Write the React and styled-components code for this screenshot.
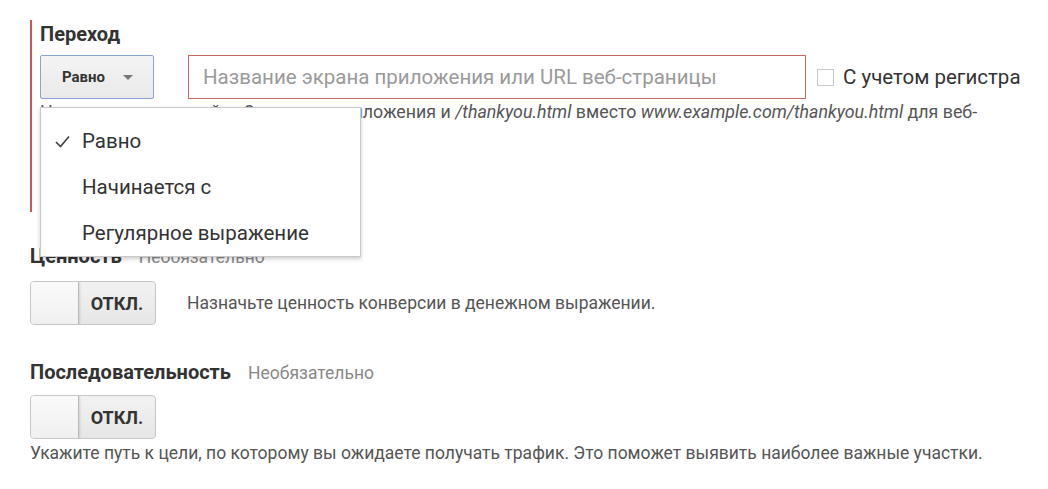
import styled, { createGlobalStyle } from "styled-components";

const GlobalStyle = createGlobalStyle`
  html, body {
    margin: 0;
    padding: 0;
    background: #fff;
  }
  body {
    font-family: Roboto, "Noto Sans", sans-serif;
    color: #333;
  }
`;

const Page = styled.div`
  width: 1048px;
  height: 489px;
  overflow: hidden;
  padding: 20px 0 0 30px;
  box-sizing: border-box;
`;

const Section = styled.div`
  border-left: 2px solid #d0574a;
  padding: 2px 0 0 8px;
  height: 192px;
  box-sizing: border-box;
`;

const Title = styled.div`
  font-size: 20px;
  font-weight: 700;
  color: #333;
  line-height: 24px;
  display: flex;
  align-items: baseline;
  gap: 17px;
  white-space: nowrap;
`;

const Optional = styled.span`
  font-size: 17.5px;
  font-weight: 400;
  color: #888;
`;

const Row = styled.div`
  display: flex;
  align-items: center;
  margin-top: 9px;
`;

const DropWrap = styled.div`
  position: relative;
  width: 114px;
  margin-right: 34px;
`;

const DropButton = styled.button`
  width: 114px;
  height: 44px;
  border: 1px solid #8aa4d6;
  border-radius: 2px;
  background: linear-gradient(#f4f4f4, #e9e9e9);
  font-family: Roboto, sans-serif;
  font-size: 15px;
  font-weight: 700;
  color: #333;
  display: flex;
  align-items: center;
  padding: 0 0 0 21px;
  gap: 18px;
`;

const Caret = styled.span`
  width: 0;
  height: 0;
  border-left: 5px solid transparent;
  border-right: 5px solid transparent;
  border-top: 5px solid #777;
`;

const Menu = styled.ul`
  position: absolute;
  top: 52px;
  left: 0;
  width: 321px;
  margin: 0;
  padding: 10px 0 0;
  list-style: none;
  background: #fff;
  border: 1px solid #c9c9c9;
  box-shadow: 0 2px 4px rgba(0, 0, 0, 0.2);
  box-sizing: border-box;
  z-index: 2;
`;

const MenuItem = styled.li`
  height: 46px;
  display: flex;
  align-items: center;
  padding-left: 14px;
  font-size: 20.5px;
  color: #333;
  white-space: nowrap;
`;

const Check = styled.span`
  width: 27px;
  display: inline-flex;
  align-items: center;
  visibility: ${(p) => (p.$on ? "visible" : "hidden")};
`;

const TextInput = styled.input`
  width: 618px;
  height: 44px;
  box-sizing: border-box;
  border: 1px solid #c96a60;
  border-radius: 0;
  padding: 0 14px;
  font-family: Roboto, sans-serif;
  font-size: 20.5px;
  color: #333;
  outline: none;
  &::placeholder {
    color: #9a9a9a;
  }
`;

const CheckLabel = styled.label`
  display: flex;
  align-items: center;
  margin-left: 11px;
  font-size: 20.5px;
  color: #333;
  gap: 9px;
  white-space: nowrap;
`;

const Box = styled.span`
  width: 15px;
  height: 15px;
  border: 1px solid #c8c8c8;
  background: #fff;
`;

const Help = styled.p`
  margin: 2px 0 0;
  width: 960px;
  font-size: 17.8px;
  line-height: 22px;
  color: #555;
  em {
    font-style: italic;
  }
`;

const Block = styled.div`
  margin-top: ${(p) => p.$top}px;
`;

const ToggleRow = styled.div`
  display: flex;
  align-items: center;
  gap: 31px;
  margin-top: ${(p) => p.$top}px;
`;

const Toggle = styled.div`
  width: 126px;
  height: 44px;
  box-sizing: border-box;
  border: 1px solid #c6c6c6;
  border-radius: 4px;
  background: linear-gradient(#f2f2f2, #e6e6e6);
  display: flex;
  overflow: hidden;
`;

const Knob = styled.div`
  width: 47px;
  background: linear-gradient(#fafafa, #f0f0f0);
  border-right: 1px solid #b9b9b9;
  box-shadow: 1px 0 2px rgba(0, 0, 0, 0.12);
`;

const ToggleText = styled.div`
  flex: 1;
  display: flex;
  align-items: center;
  justify-content: center;
  font-size: 18px;
  font-weight: 700;
  color: #333;
`;

const Note = styled.div`
  font-size: 17.5px;
  line-height: 22px;
  color: #555;
  white-space: nowrap;
`;

const BottomNote = styled(Note)`
  margin-top: 3px;
`;

const SwitchOff = () => (
  <Toggle>
    <Knob />
    <ToggleText>ОТКЛ.</ToggleText>
  </Toggle>
);

export default function App() {
  return (
    <>
      <GlobalStyle />
      <Page>
        <Section>
          <Title>Переход</Title>
          <Row>
            <DropWrap>
              <DropButton>
                Равно <Caret />
              </DropButton>
              <Menu>
                <MenuItem>
                  <Check $on>
                    <svg width="15" height="13" viewBox="0 0 15 13">
                      <path d="M1 7 L5.5 11.5 L14 1.5" fill="none" stroke="#444" strokeWidth="1.7" />
                    </svg>
                  </Check>
                  Равно
                </MenuItem>
                <MenuItem>
                  <Check />
                  Начинается с
                </MenuItem>
                <MenuItem>
                  <Check />
                  Регулярное выражение
                </MenuItem>
              </Menu>
            </DropWrap>
            <TextInput placeholder="Название экрана приложения или URL веб-страницы" />
            <CheckLabel>
              <Box />
              С учетом регистра
            </CheckLabel>
          </Row>
          <Help>
            Например, используйте <em>Экран</em> для приложения и <em>/thankyou.html</em> вместо{" "}
            <em>www.example.com/thankyou.html</em> для веб-страницы.
          </Help>
        </Section>

        <Block $top={32}>
          <Title>
            Ценность <Optional>Необязательно</Optional>
          </Title>
          <ToggleRow $top={12}>
            <SwitchOff />
            <Note>Назначьте ценность конверсии в денежном выражении.</Note>
          </ToggleRow>
        </Block>

        <Block $top={35}>
          <Title>
            Последовательность <Optional>Необязательно</Optional>
          </Title>
          <ToggleRow $top={10}>
            <SwitchOff />
          </ToggleRow>
          <BottomNote>
            Укажите путь к цели, по которому вы ожидаете получать трафик. Это поможет выявить наиболее важные участки.
          </BottomNote>
        </Block>
      </Page>
    </>
  );
}
